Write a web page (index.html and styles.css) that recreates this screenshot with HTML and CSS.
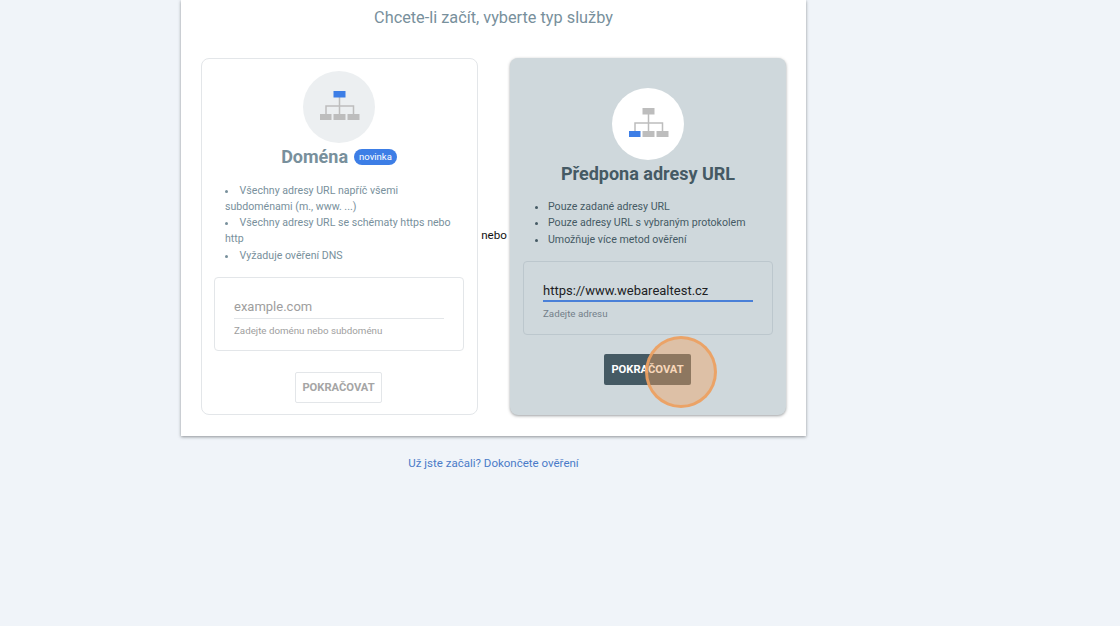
FILE: index.html
```html
<!DOCTYPE html>
<html lang="cs">
<head>
<meta charset="utf-8">
<title>Search Console</title>
<link rel="stylesheet" href="styles.css">
</head>
<body>
<main class="sheet">
  <h1 class="lead">Chcete-li začít, vyberte typ služby</h1>
  <div class="choices">
    <section class="card card-domain">
      <div class="disc">
        <svg class="tree" viewBox="0 0 40 29" width="40" height="29" aria-hidden="true">
          <path d="M19.500 6v17M6 23v-8h27.500v8" fill="none" stroke="#bdbdbd" stroke-width="1.500"/>
          <rect x="13.500" y="0" width="12" height="6.500" fill="#3d7ee6"/>
          <rect x="0" y="23" width="11.500" height="6" fill="#bdbdbd"/>
          <rect x="13.500" y="23" width="12" height="6" fill="#bdbdbd"/>
          <rect x="27.500" y="23" width="12" height="6" fill="#bdbdbd"/>
        </svg>
      </div>
      <h2 class="card-title">Doména <span class="badge">novinka</span></h2>
      <ul class="points points-inside">
        <li>Všechny adresy URL napříč všemi subdoménami (m., www. ...)</li>
        <li>Všechny adresy URL se schématy https nebo http</li>
        <li>Vyžaduje ověření DNS</li>
      </ul>
      <div class="field-box">
        <div class="input placeholder">example.com</div>
        <div class="hint">Zadejte doménu nebo subdoménu</div>
      </div>
      <button class="btn btn-off" type="button">POKRAČOVAT</button>
    </section>
    <div class="or">nebo</div>
    <section class="card card-prefix">
      <div class="disc">
        <svg class="tree" viewBox="0 0 40 29" width="40" height="29" aria-hidden="true">
          <path d="M19.500 6v17M6 23v-8h27.500v8" fill="none" stroke="#bdbdbd" stroke-width="1.500"/>
          <rect x="13.500" y="0" width="12" height="6.500" fill="#bdbdbd"/>
          <rect x="0" y="23" width="11.500" height="6" fill="#3d7ee6"/>
          <rect x="13.500" y="23" width="12" height="6" fill="#bdbdbd"/>
          <rect x="27.500" y="23" width="12" height="6" fill="#bdbdbd"/>
        </svg>
      </div>
      <h2 class="card-title">Předpona adresy URL</h2>
      <ul class="points">
        <li>Pouze zadané adresy URL</li>
        <li>Pouze adresy URL s vybraným protokolem</li>
        <li>Umožňuje více metod ověření</li>
      </ul>
      <div class="field-box">
        <div class="input filled">https://www.webarealtest.cz</div>
        <div class="hint">Zadejte adresu</div>
      </div>
      <button class="btn btn-on" type="button">POKRAČOVAT</button>
    </section>
  </div>
</main>
<p class="resume"><a href="#">Už jste začali? Dokončete ověření</a></p>
<div class="click-mark"></div>
</body>
</html>
```
FILE: styles.css
```css
* { box-sizing: border-box; }
html, body { height: 100%; }
body {
  margin: 0;
  background: #f0f4f9;
  font-family: Roboto, "Noto Sans", sans-serif;
  overflow: hidden;
  position: relative;
}
.sheet {
  width: 625px;
  margin-left: 181px;
  height: 436px;
  background: #fff;
  box-shadow: 0 1px 3px rgba(60, 64, 67, .55);
  padding: 8px 20px 0;
}
.lead {
  margin: 0;
  font-size: 16.300px;
  line-height: 19px;
  font-weight: 400;
  color: #78909c;
  text-align: center;
}
.choices {
  display: flex;
  align-items: stretch;
  margin-top: 31px;
  height: 357px;
}
.card {
  width: 276px;
  flex: none;
  border-radius: 8px;
  display: flex;
  flex-direction: column;
  align-items: center;
  padding: 0 13px;
}
.card-domain {
  width: 277px;
  border: 1px solid #e3e6e9;
  color: #78909c;
  padding: 12px 13px 0 12px;
}
.card-prefix {
  background: #cfd8dc;
  color: #455a64;
  padding-top: 30px;
  box-shadow: 0 1px 3px rgba(60, 64, 67, .5);
}
.or {
  flex: 1;
  align-self: center;
  text-align: center;
  font-size: 11.600px;
  line-height: 16px;
  color: #111;
  padding-bottom: 3px;
}
.disc {
  width: 72px;
  height: 72px;
  border-radius: 50%;
  display: flex;
  align-items: center;
  justify-content: center;
  flex: none;
}
.tree { margin: 0 0 3px 2px; }
.card-domain .disc { background: #eceff1; }
.card-prefix .disc { background: #fff; }
.card-title {
  margin: 2px 0 0;
  font-size: 18px;
  line-height: 24px;
  font-weight: 700;
  white-space: nowrap;
  display: flex;
  align-items: center;
  gap: 6px;
}
.badge {
  background: #3d7ee6;
  color: #fff;
  font-size: 9.500px;
  line-height: 16px;
  font-weight: 400;
  border-radius: 8px;
  padding: 0 5px;
}
.points {
  align-self: stretch;
  margin: 13px 0 0;
  padding: 0 0 0 25px;
  font-size: 10.600px;
  line-height: 16.300px;
}
.points-inside {
  list-style-position: inside;
  padding-left: 11px;
  margin-top: 13.500px;
}
.field-box {
  align-self: stretch;
  height: 74px;
  flex: none;
  margin-top: 13.500px;
  border: 1px solid #e3e6e9;
  border-radius: 4px;
  padding: 19px 19px 0;
}
.card-prefix .field-box {
  border-color: #bcc7cd;
  margin-top: 13px;
  padding-top: 18px;
}
.input {
  font-size: 13px;
  line-height: 20px;
  height: 22px;
  border-bottom: 1px solid #e3e6e9;
  white-space: nowrap;
}
.placeholder { color: #9e9e9e; }
.filled {
  color: #202124;
  line-height: 22px;
  border-bottom: 2px solid #4a80d8;
}
.hint {
  margin-top: 5px;
  font-size: 9.750px;
  line-height: 14px;
  color: #9e9e9e;
}
.card-prefix .hint { color: #73808a; }
.btn {
  font-family: inherit;
  width: 87px;
  height: 31px;
  padding: 0;
  font-size: 11.200px;
  font-weight: 700;
  border-radius: 2px;
  cursor: pointer;
  flex: none;
}
.btn-off {
  margin: 21px 1px 0 0;
  background: #fff;
  color: #a5a5a5;
  border: 1px solid #e3e6e9;
}
.btn-on {
  margin: 19px 1px 0 0;
  background: #455a64;
  color: #fff;
  border: 0;
}
.resume {
  width: 625px;
  margin: 19px 0 0 181px;
  text-align: center;
  font-size: 11.500px;
  line-height: 16px;
}
.resume a {
  color: #4a7bc8;
  text-decoration: none;
}
.click-mark {
  position: absolute;
  left: 645px;
  top: 336px;
  width: 72px;
  height: 72px;
  border-radius: 50%;
  background: rgba(240, 160, 90, .42);
  border: 3px solid rgba(236, 160, 96, .9);
}
```
